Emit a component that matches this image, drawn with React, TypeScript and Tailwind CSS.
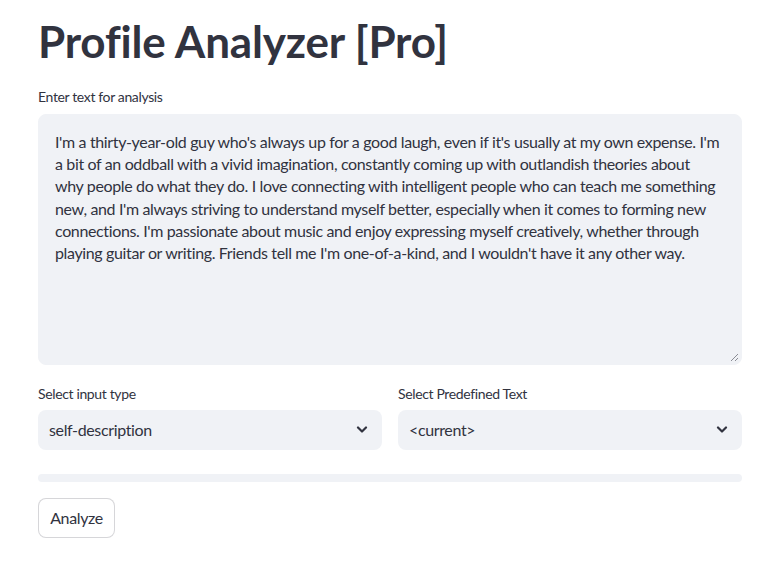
const lines = [
  "I'm a thirty-year-old guy who's always up for a good laugh, even if it's usually at my own expense. I'm",
  'a bit of an oddball with a vivid imagination, constantly coming up with outlandish theories about',
  'why people do what they do. I love connecting with intelligent people who can teach me something',
  "new, and I'm always striving to understand myself better, especially when it comes to forming new",
  "connections. I'm passionate about music and enjoy expressing myself creatively, whether through",
  "playing guitar or writing. Friends tell me I'm one-of-a-kind, and I wouldn't have it any other way.",
];

function Chevron() {
  return (
    <svg width="12" height="8" viewBox="0 0 12 8" fill="none">
      <path d="M2 1.5l4 4 4-4" stroke="#31333F" strokeWidth="2.2" strokeLinecap="round" strokeLinejoin="round" />
    </svg>
  );
}

function SelectBox({ label, value }: { label: string; value: string }) {
  return (
    <div className="flex flex-col">
      <label className="text-[14px] leading-[22px] h-[22px] mb-[5px]">{label}</label>
      <div className="h-10 bg-[#F0F2F6] rounded-lg flex items-center justify-between pl-[11px] pr-[14px]">
        <span className="text-[16px] leading-[22px]">{value}</span>
        <Chevron />
      </div>
    </div>
  );
}

export default function App() {
  return (
    <div className="min-h-screen bg-white text-[#31333F] font-['Lato',sans-serif] tracking-[-0.36px]">
      <div className="ml-[38px] w-[704px] pt-[15px] flex flex-col">
        <h1 className="text-[44px] font-bold leading-[1.2] tracking-[-0.15px]">Profile Analyzer [Pro]</h1>

        <label className="mt-[18px] text-[14px] leading-[22px] h-[22px] mb-[6px]">Enter text for analysis</label>
        <div className="relative h-[251px] bg-[#F0F2F6] rounded-lg border border-[#F0F2F6] px-4 pt-[16px]">
          {lines.map((l) => (
            <div key={l} className="text-[16px] leading-[22.3px] whitespace-nowrap">{l}</div>
          ))}
          <svg className="absolute right-[2px] bottom-[2px]" width="9" height="9" viewBox="0 0 9 9">
            <path d="M8 1L1 8M8 5L5 8" stroke="#8a8c94" strokeWidth="1" />
          </svg>
        </div>

        <div className="mt-[18px] grid grid-cols-2 gap-4">
          <SelectBox label="Select input type" value="self-description" />
          <SelectBox label="Select Predefined Text" value="<current>" />
        </div>

        <div className="mt-6 h-2 rounded-full bg-[#F0F2F6]" />

        <div className="mt-4">
          <button className="w-[77px] h-10 rounded-lg border border-[rgba(49,51,63,0.2)] bg-white text-[16px] flex items-center justify-center">
            Analyze
          </button>
        </div>
      </div>
    </div>
  );
}
